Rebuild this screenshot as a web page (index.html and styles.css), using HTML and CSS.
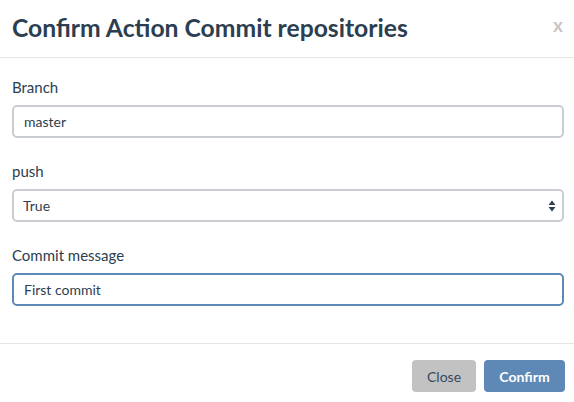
FILE: index.html
```html
<!DOCTYPE html>
<html>
<head>
<meta charset="utf-8">
<link rel="stylesheet" href="styles.css">
</head>
<body>
<div class="modal">
  <div class="modal-header">
    <h4 class="modal-title">Confirm Action Commit repositories</h4>
    <span class="close-x">x</span>
  </div>
  <div class="modal-body">
    <div class="group">
      <label class="label">Branch</label>
      <input class="field" type="text" value="master">
    </div>
    <div class="group">
      <label class="label">push</label>
      <div class="select-wrap">
        <select class="field select"><option>True</option></select>
        <svg class="arrows" width="8" height="12" viewBox="0 0 8 12"><path d="M4 0.5 L7.5 5 L0.5 5 Z M4 11.5 L7.5 7 L0.5 7 Z" fill="#2c3e50"/></svg>
      </div>
    </div>
    <div class="group">
      <label class="label">Commit message</label>
      <input class="field focus" type="text" value="First commit">
    </div>
  </div>
  <div class="modal-footer">
    <button class="btn btn-close">Close</button>
    <button class="btn btn-confirm">Confirm</button>
  </div>
</div>
</body>
</html>
```
FILE: styles.css
```css
html, body { margin: 0; padding: 0; background: #fff; }
body { font-family: Lato, "Open Sans", sans-serif; color: #2c3e50; }
.modal { width: 574px; }
.modal-header {
  display: flex; justify-content: space-between; align-items: flex-start;
  padding: 13px 11px 15px 12px;
  border-bottom: 1px solid #e5e5e5;
}
.modal-title { margin: 0; font-size: 24.7px; line-height: 29px; font-weight: 700; color: #2c3e50; }
.close-x { font-size: 19px; font-weight: 700; color: #c6c6c6; line-height: 22px; margin-top: 1px; }
.modal-body { padding: 19px 10px 37px 12px; display: flex; flex-direction: column; gap: 23px; }
.group { display: flex; flex-direction: column; gap: 8px; }
.label { font-size: 15px; line-height: 20px; color: #2c3e50; }
.field {
  box-sizing: border-box; width: 100%; height: 33px; margin: 0;
  border: 2px solid #c9cdd1; border-radius: 5px; background: #fff;
  font-family: Lato, sans-serif; font-size: 14px; color: #2c3e50;
  padding: 0 10px; outline: none;
}
.select-wrap { position: relative; }
.select { appearance: none; -webkit-appearance: none; padding: 0 9px; }
.arrows { position: absolute; right: 8px; top: 11px; }
.field.focus { border-color: #5d89b6; }
.modal-footer {
  border-top: 1px solid #e5e5e5;
  padding: 16px 9px 10px 12px;
  display: flex; justify-content: flex-end; gap: 8px;
}
.btn {
  height: 32px; border: none; border-radius: 4px;
  font-family: Lato, sans-serif; font-size: 14px; padding: 0 15px;
}
.btn-close { background: #c2c2c2; color: #34495e; width: 64px; }
.btn-confirm { background: #5e89b6; color: #fff; font-weight: 700; width: 81px; }
```
